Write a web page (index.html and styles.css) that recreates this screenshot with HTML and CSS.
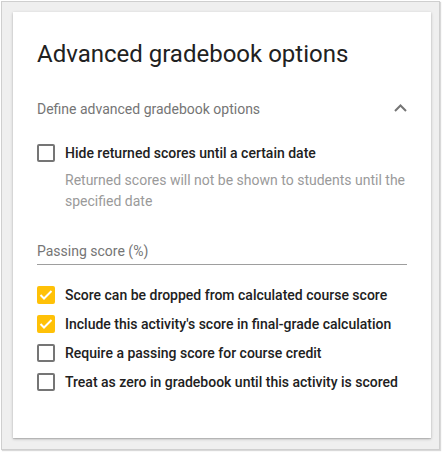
FILE: index.html
```html
<!DOCTYPE html>
<html>
<head>
<meta charset="utf-8">
<link rel="stylesheet" href="styles.css">
</head>
<body>
<div class="frame">
  <div class="card">
    <h1 class="title">Advanced gradebook options</h1>
    <div class="section-head">
      <span class="section-label">Define advanced gradebook options</span>
      <svg class="chevron" width="13" height="8" viewBox="0 0 13 8"><polyline points="1,7 6.5,1.5 12,7" fill="none" stroke="#757575" stroke-width="2"/></svg>
    </div>
    <div class="option">
      <span class="box"></span>
      <span class="label">Hide returned scores until a certain date</span>
    </div>
    <p class="desc">Returned scores will not be shown to students until the specified date</p>
    <div class="field">Passing score (%)</div>
    <div class="list">
      <div class="option">
        <span class="box checked"><svg width="18" height="18" viewBox="0 0 18 18"><polyline points="3.5,9 7,12.5 14.5,5" fill="none" stroke="#fff" stroke-width="2"/></svg></span>
        <span class="label">Score can be dropped from calculated course score</span>
      </div>
      <div class="option">
        <span class="box checked"><svg width="18" height="18" viewBox="0 0 18 18"><polyline points="3.5,9 7,12.5 14.5,5" fill="none" stroke="#fff" stroke-width="2"/></svg></span>
        <span class="label">Include this activity's score in final-grade calculation</span>
      </div>
      <div class="option">
        <span class="box"></span>
        <span class="label">Require a passing score for course credit</span>
      </div>
      <div class="option">
        <span class="box"></span>
        <span class="label">Treat as zero in gradebook until this activity is scored</span>
      </div>
    </div>
  </div>
</div>
</body>
</html>
```

FILE: styles.css
```css
* { box-sizing: border-box; }
html, body { margin: 0; padding: 0; background: #fff; }
body { font-family: Roboto, "Liberation Sans", sans-serif; width: 442px; height: 452px; overflow: hidden; }
.frame {
  margin: 1px 0 0 1px;
  width: 439px;
  height: 449px;
  border: 1px solid #cfcfcf;
  background: #efefef;
  padding: 10px 7px 10px 11px;
  box-shadow: 1px 1px 1px rgba(0,0,0,0.15);
}
.card {
  width: 418px;
  height: 426px;
  background: #fff;
  padding: 26px 24px 0 24px;
  box-shadow: 0 1px 3px rgba(0,0,0,0.22), 0 1px 1px rgba(0,0,0,0.12);
}
.title {
  margin: 0;
  font-size: 24px;
  line-height: 32px;
  font-weight: 400;
  color: #212121;
}
.section-head {
  margin-top: 29px;
  display: flex;
  justify-content: space-between;
  align-items: center;
  height: 20px;
}
.section-label { font-size: 14px; line-height: 20px; color: #757575; }
.chevron { display: block; margin-top: -3px; }
.option {
  display: flex;
  align-items: center;
  gap: 10px;
  height: 20px;
}
.section-head + .option { margin-top: 24px; }
.box {
  width: 18px;
  height: 18px;
  border: 2px solid #757575;
  border-radius: 2px;
  flex: none;
  display: flex;
  align-items: center;
  justify-content: center;
}
.box.checked { background: #ffc107; border-color: #ffc107; }
.box.checked svg { display: block; flex: none; margin: -2px; }
.label { font-size: 14px; line-height: 20px; font-weight: 500; color: #212121; }
.desc {
  margin: 7px 0 0 28px;
  font-size: 14px;
  line-height: 20.5px;
  color: #9a9a9a;
}
.field {
  margin-top: 30px;
  font-size: 14px;
  line-height: 20px;
  color: #757575;
  padding-bottom: 3px;
  border-bottom: 1px solid #9e9e9e;
}
.list {
  margin-top: 20px;
  display: flex;
  flex-direction: column;
  gap: 9px;
}
```
